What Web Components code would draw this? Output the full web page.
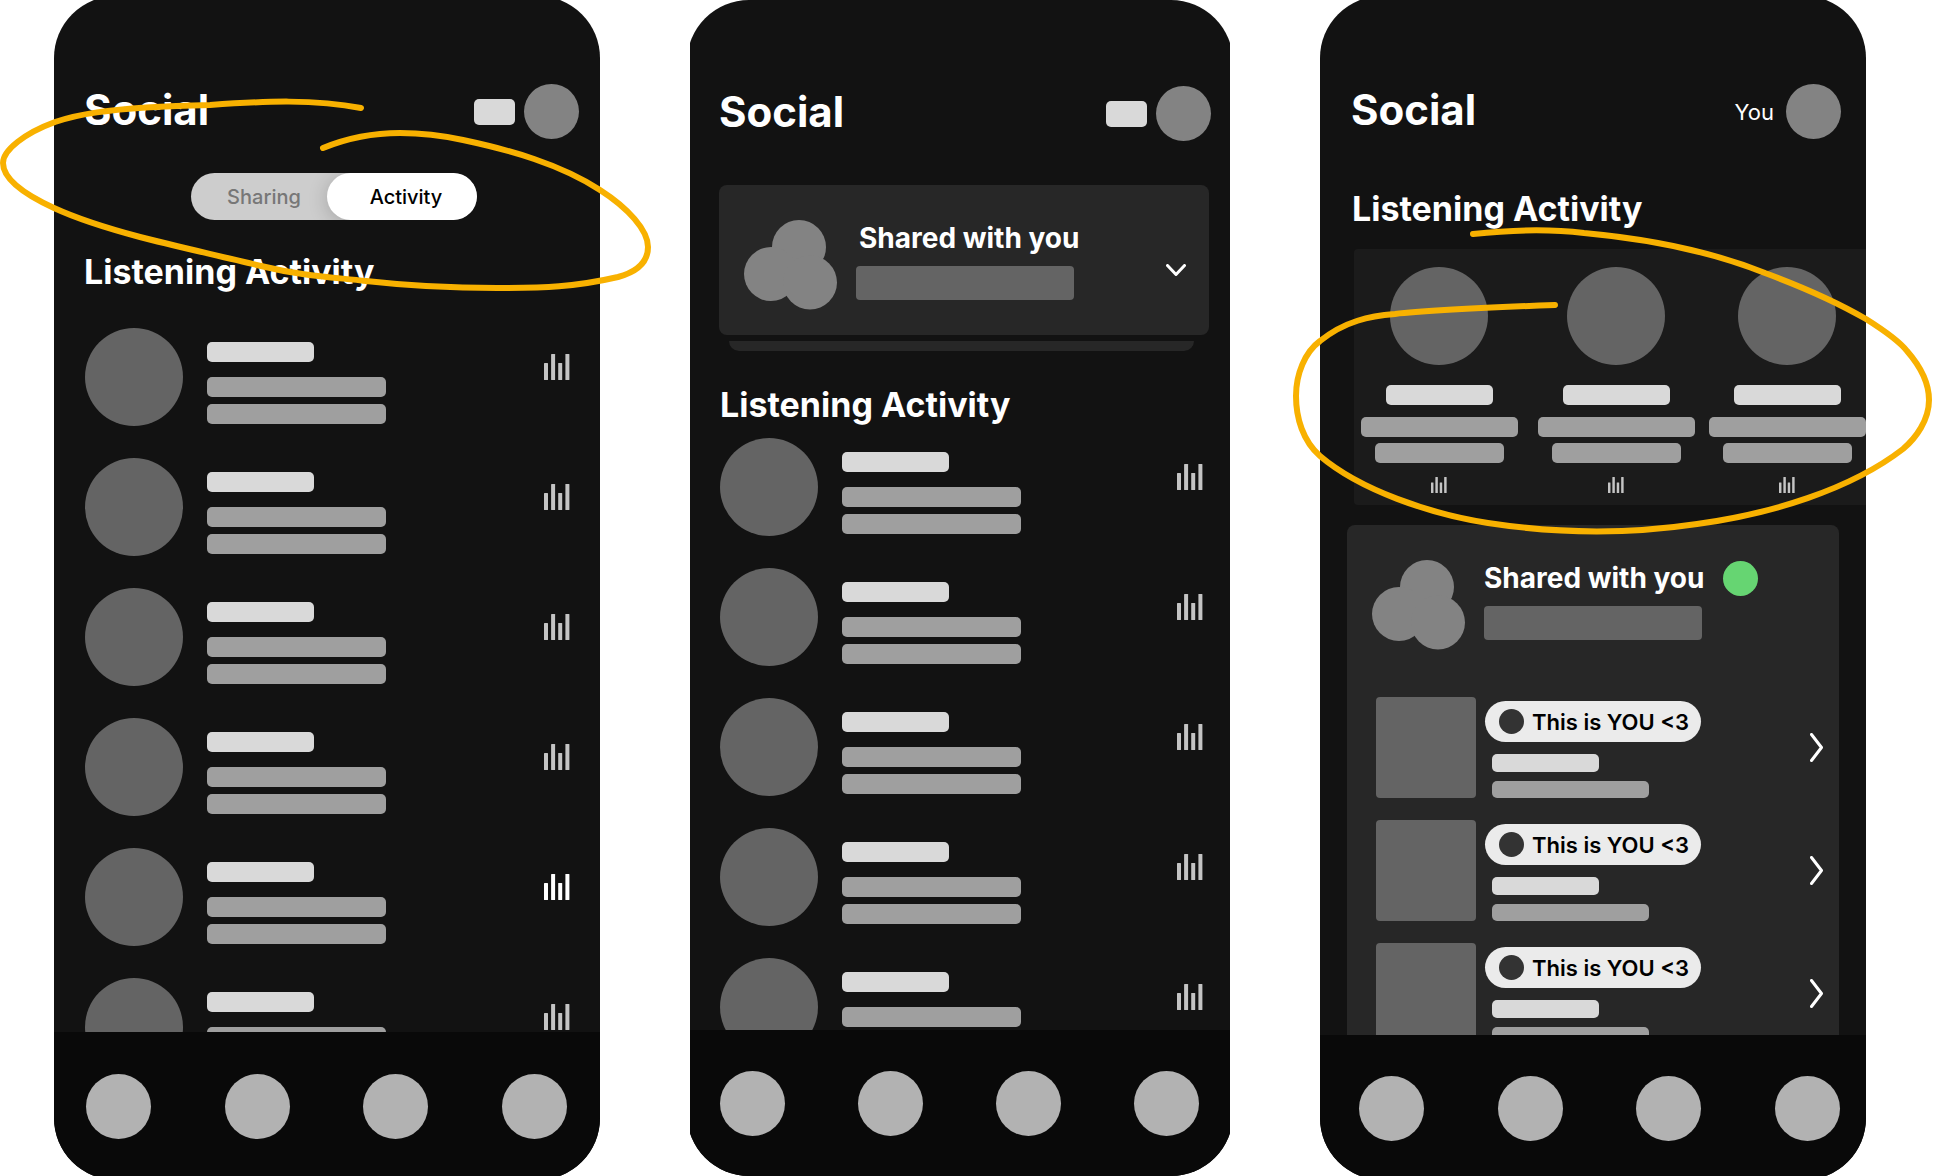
<!DOCTYPE html>
<html lang="en">
<head>
<meta charset="UTF-8">
<meta name="viewport" content="width=device-width, initial-scale=1.0">
<title>Social</title>
<style>
    :root {
        --color-screen: #121212;
        --color-nav: #090909;
        --color-card: #272727;
        --color-light: #d9d9d9;
        --color-mid: #9f9f9f;
        --color-dark: #646464;
        --color-avatar: #838383;
        --color-marker: #f8b100;
    }

    body {
        margin: 0;
        background: #fff;
        color: #fff;
        font-family: Inter, "Liberation Sans", sans-serif;
    }

    main {
        display: grid;
        grid-template-columns: 546fr 540fr 546fr;
        column-gap: 90px;
        height: 100vh;
        padding: 0 67px 0 54px;
        box-sizing: border-box;
        overflow: hidden;
    }

    h2 {
        margin: 0;
        font-size: 34px;
        line-height: 40px;
        font-weight: 700;
    }

    .list {
        display: flex;
        flex-direction: column;
        gap: 32px;
        padding: 0 30px 0 31px;
    }

    #activity h2 { padding: 32px 30px 36px; }
    #shared h2 { padding: 34px 33px 13px; }
    #carousel h2 { padding: 50px 32px 20px; }
    #shared .list { padding-left: 33px; }

    #activity { --nav-padding: 42px 33px 41px 32px; }
    #shared { --bleed-y: 0px; --bleed-x: -3px; --clip: hidden; --nav-padding: 41px 34px 40px 33px; }
    #carousel { --nav-padding: 41px 26px 39px 39px; }

    #shared app-header { --header-padding: 86px 22px 0 32px; }
    #carousel app-header { --header-padding: 88px 25px 0 31px; --header-gap: 12px; }

    .deck { padding: 44px 24px 0 32px; --title-indent: 3px; }
    .strip {
        display: grid;
        grid-template-columns: 178fr 171fr 157fr;
        margin-left: 34px;
        padding: 18px 0 12px 6px;
        background: #1b1b1b;
        border-radius: 4px 0 0 4px;
    }

    .shared-card {
        display: flex;
        flex-direction: column;
        gap: 22px;
        margin: 20px 27px 0 27px;
        padding: 35px 16px 60px 25px;
        background: var(--color-card);
        border-radius: 8px;
    }

    .shared-card shared-summary { margin-bottom: 25px; }
    .you { font-size: 22px; line-height: 28px; }
</style>
</head>
<body>
<main>
    <app-phone id="activity">
        <app-header heading="Social"><placeholder-bar width="41px" height="26px"></placeholder-bar></app-header>
        <view-toggle></view-toggle>
        <h2>Listening Activity</h2>
        <div class="list">
            <activity-row></activity-row>
            <activity-row></activity-row>
            <activity-row></activity-row>
            <activity-row></activity-row>
            <activity-row active></activity-row>
            <activity-row></activity-row>
        </div>
        <marker-stroke slot="marker" left="-54px" width="660" height="300"
            path="M361 108C315 99 265 101 210 105C100 107 70 117 55 122C25 133 3 150 3 163C3 180 28 196 54 208C80 220 110 229 140 237S220 256 261 266S330 277 366 281C410 286 450 288 497 288S575 287 618 277C640 271 648 260 648 247C648 230 628 208 600 190C560 164 510 150 463 140C440 135 420 133 400 133C370 133 345 139 323 148"></marker-stroke>
    </app-phone>

    <app-phone id="shared">
        <app-header heading="Social"><placeholder-bar width="41px" height="26px"></placeholder-bar></app-header>
        <div class="deck"><shared-deck></shared-deck></div>
        <h2>Listening Activity</h2>
        <div class="list">
            <activity-row></activity-row>
            <activity-row></activity-row>
            <activity-row></activity-row>
            <activity-row></activity-row>
            <activity-row></activity-row>
        </div>
    </app-phone>

    <app-phone id="carousel">
        <app-header heading="Social"><span class="you">You</span></app-header>
        <h2>Listening Activity</h2>
        <div class="strip">
            <activity-card></activity-card>
            <activity-card></activity-card>
            <activity-card></activity-card>
        </div>
        <section class="shared-card">
            <shared-summary online></shared-summary>
            <playlist-row>This is YOU &lt;3</playlist-row>
            <playlist-row>This is YOU &lt;3</playlist-row>
            <playlist-row>This is YOU &lt;3</playlist-row>
        </section>
        <marker-stroke slot="marker" left="-27px" width="640" height="540"
            path="M180 234C217 230 257 229 291 233C357 239 417 251 472 273C507 286 542 301 573 319C592 331 607 342 614 351C628 367 636 384 636 400C636 420 623 438 610 449C557 490 477 514 404 524C337 534 267 534 195 523C137 514 67 490 27 456C10 441 3 418 3 396C3 374 12 352 27 341C52 321 77 316 102 314C127 311 207 307 262 305"></marker-stroke>
    </app-phone>
</main>

<script>
class PlaceholderBar extends HTMLElement {
    constructor() {
        super();
        this.attachShadow({ mode: 'open' });
    }

    connectedCallback() {
        const width = this.getAttribute('width') || '107px';
        const height = this.getAttribute('height') || '20px';
        const color = this.getAttribute('color') || 'var(--color-light)';
        const radius = this.getAttribute('radius') || '5px';

        this.shadowRoot.innerHTML = `
            <style>
                :host {
                    display: block;
                    flex: none;
                    width: ${width};
                    height: ${height};
                    background: ${color};
                    border-radius: ${radius};
                }
            </style>
        `;
    }
}

class EqualizerIcon extends HTMLElement {
    constructor() {
        super();
        this.attachShadow({ mode: 'open' });
        this.shadowRoot.innerHTML = `
            <style>
                :host { display: block; flex: none; width: 26px; height: 26px; color: #c4c4c4; }
                svg { display: block; width: 100%; height: 100%; fill: currentColor; }
            </style>
            <svg viewBox="0 0 26 26" aria-hidden="true">
                <rect x="0" y="9" width="4" height="17" rx=".5"/>
                <rect x="7.1" y="0" width="4" height="26" rx=".5"/>
                <rect x="14.2" y="9" width="4" height="17" rx=".5"/>
                <rect x="21.4" y="0" width="4" height="26" rx=".5"/>
            </svg>
        `;
    }
}

class MarkerStroke extends HTMLElement {
    constructor() {
        super();
        this.attachShadow({ mode: 'open' });
    }

    connectedCallback() {
        const width = this.getAttribute('width');
        const height = this.getAttribute('height');

        this.shadowRoot.innerHTML = `
            <style>
                :host {
                    position: absolute;
                    top: 0;
                    left: ${this.getAttribute('left')};
                    pointer-events: none;
                }
                svg { display: block; }
                path {
                    fill: none;
                    stroke: var(--color-marker);
                    stroke-width: 6;
                    stroke-linecap: round;
                    stroke-linejoin: round;
                }
            </style>
            <svg width="${width}" height="${height}" viewBox="0 0 ${width} ${height}" aria-hidden="true">
                <path d="${this.getAttribute('path')}"/>
            </svg>
        `;
    }
}

class AppPhone extends HTMLElement {
    constructor() {
        super();
        this.attachShadow({ mode: 'open' });
        this.shadowRoot.innerHTML = `
            <style>
                :host {
                    display: flex;
                    position: relative;
                    min-width: 0;
                    min-height: 0;
                    overflow: var(--clip, visible);
                }
                .screen {
                    flex: 1;
                    min-width: 0;
                    display: flex;
                    flex-direction: column;
                    margin: var(--bleed-y, -4px) var(--bleed-x, 0);
                    border-radius: 62px;
                    background: var(--color-screen);
                    overflow: hidden;
                }
                .content {
                    flex: 1;
                    min-height: 0;
                    overflow: hidden;
                }
                nav {
                    display: flex;
                    justify-content: space-between;
                    padding: var(--nav-padding);
                    background: var(--color-nav);
                }
                button {
                    width: 65px;
                    height: 65px;
                    padding: 0;
                    border: 0;
                    border-radius: 50%;
                    background: #b2b2b2;
                    cursor: pointer;
                }
            </style>
            <div class="screen">
                <div class="content"><slot></slot></div>
                <nav>
                    <button aria-label="Home"></button>
                    <button aria-label="Search"></button>
                    <button aria-label="Social"></button>
                    <button aria-label="Library"></button>
                </nav>
            </div>
            <slot name="marker"></slot>
        `;
    }
}

class AppHeader extends HTMLElement {
    constructor() {
        super();
        this.attachShadow({ mode: 'open' });
    }

    connectedCallback() {
        this.shadowRoot.innerHTML = `
            <style>
                :host {
                    display: flex;
                    align-items: center;
                    gap: var(--header-gap, 9px);
                    padding: var(--header-padding, 88px 21px 0 30px);
                }
                h1 {
                    flex: 1;
                    margin: 0;
                    padding-bottom: 4px;
                    font-size: 42px;
                    line-height: 50px;
                    font-weight: 700;
                }
                button {
                    width: 55px;
                    height: 55px;
                    padding: 0;
                    border: 0;
                    border-radius: 50%;
                    background: var(--color-avatar);
                    cursor: pointer;
                }
            </style>
            <h1>${this.getAttribute('heading')}</h1>
            <slot></slot>
            <button aria-label="Profile"></button>
        `;
    }
}

class ViewToggle extends HTMLElement {
    constructor() {
        super();
        this.attachShadow({ mode: 'open' });
        this.shadowRoot.innerHTML = `
            <style>
                :host { display: flex; justify-content: center; padding: 34px 0 0 14px; }
                .track {
                    display: flex;
                    width: 286px;
                    height: 47px;
                    border-radius: 24px;
                    background: #cdcdcd;
                    overflow: hidden;
                }
                button {
                    flex: 1;
                    padding: 1px 0 0 10px;
                    border: 0;
                    border-radius: 24px;
                    background: transparent;
                    color: #777;
                    font: 500 20px/24px Inter, "Liberation Sans", sans-serif;
                    cursor: pointer;
                }
                button[aria-pressed="true"] {
                    flex: none;
                    width: 150px;
                    padding-left: 8px;
                    background: #fff;
                    color: #000;
                    box-shadow: 0 3px 20px rgba(0, 0, 0, .2);
                }
            </style>
            <div class="track" role="group" aria-label="View">
                <button aria-pressed="false">Sharing</button>
                <button aria-pressed="true">Activity</button>
            </div>
        `;

        const buttons = this.shadowRoot.querySelectorAll('button');
        buttons.forEach(button => {
            button.addEventListener('click', () => {
                buttons.forEach(b => b.setAttribute('aria-pressed', b === button));
            });
        });
    }
}

class ActivityRow extends HTMLElement {
    constructor() {
        super();
        this.attachShadow({ mode: 'open' });
        this.shadowRoot.innerHTML = `
            <style>
                :host { display: flex; align-items: flex-start; }
                .avatar {
                    flex: none;
                    width: 98px;
                    height: 98px;
                    border-radius: 50%;
                    background: var(--color-dark);
                }
                .lines {
                    flex: 1;
                    display: flex;
                    flex-direction: column;
                    gap: 7px;
                    padding: 14px 24px 0;
                }
                .name { margin-bottom: 8px; }
                equalizer-icon { margin-top: 26px; }
                :host([active]) equalizer-icon { color: #fff; }
            </style>
            <div class="avatar"></div>
            <div class="lines">
                <placeholder-bar class="name"></placeholder-bar>
                <placeholder-bar width="179px" color="var(--color-mid)"></placeholder-bar>
                <placeholder-bar width="179px" color="var(--color-mid)"></placeholder-bar>
            </div>
            <equalizer-icon></equalizer-icon>
        `;
    }
}

class ActivityCard extends HTMLElement {
    constructor() {
        super();
        this.attachShadow({ mode: 'open' });
        this.shadowRoot.innerHTML = `
            <style>
                :host {
                    display: flex;
                    flex-direction: column;
                    align-items: center;
                    width: 158px;
                }
                .avatar {
                    width: 98px;
                    height: 98px;
                    margin-bottom: 20px;
                    border-radius: 50%;
                    background: var(--color-dark);
                }
                .name { margin-bottom: 12px; }
                .track { margin-bottom: 6px; }
                equalizer-icon { width: 16px; height: 16px; margin-top: 14px; }
            </style>
            <div class="avatar"></div>
            <placeholder-bar class="name"></placeholder-bar>
            <placeholder-bar class="track" width="157px" color="var(--color-mid)"></placeholder-bar>
            <placeholder-bar width="129px" color="var(--color-mid)"></placeholder-bar>
            <equalizer-icon></equalizer-icon>
        `;
    }
}

class SharedSummary extends HTMLElement {
    constructor() {
        super();
        this.attachShadow({ mode: 'open' });
        this.shadowRoot.innerHTML = `
            <style>
                :host { display: flex; align-items: flex-start; gap: 18px; }
                .faces { flex: none; display: block; fill: var(--color-avatar); }
                .title { display: flex; align-items: center; gap: 19px; height: 36px; margin-bottom: 10px; }
                h3 {
                    margin: 0;
                    padding-left: var(--title-indent, 0);
                    font-size: 28px;
                    line-height: 36px;
                    font-weight: 700;
                    white-space: nowrap;
                }
                .dot { display: none; width: 35px; height: 35px; border-radius: 50%; background: #66d572; }
                :host([online]) .dot { display: block; }
            </style>
            <svg class="faces" width="94" height="90" viewBox="0 0 94 90" aria-hidden="true">
                <circle cx="55" cy="27" r="27"/>
                <circle cx="27" cy="54" r="27"/>
                <circle cx="66" cy="62.5" r="27"/>
            </svg>
            <div>
                <div class="title"><h3>Shared with you</h3><span class="dot"></span></div>
                <placeholder-bar width="218px" height="34px" color="var(--color-dark)" radius="4px"></placeholder-bar>
            </div>
        `;
    }
}

class SharedDeck extends HTMLElement {
    constructor() {
        super();
        this.attachShadow({ mode: 'open' });
        this.shadowRoot.innerHTML = `
            <style>
                :host { display: block; }
                .card {
                    display: flex;
                    align-items: center;
                    padding: 35px 23px 25px 25px;
                    border-radius: 8px;
                    background: var(--color-card);
                }
                shared-summary { flex: 1; }
                button { padding: 10px 0 0; border: 0; background: none; cursor: pointer; }
                button svg {
                    display: block;
                    fill: none;
                    stroke: #fff;
                    stroke-width: 3;
                    stroke-linecap: round;
                    stroke-linejoin: round;
                }
                .peek {
                    height: 10px;
                    margin: 6px 15px 0 10px;
                    border-radius: 0 0 10px 10px;
                    background: var(--color-card);
                }
            </style>
            <div class="card">
                <shared-summary></shared-summary>
                <button aria-label="Expand"><svg width="20" height="13" viewBox="0 0 20 13"><path d="M1.5 1.5L10 10.5L18.5 1.5"/></svg></button>
            </div>
            <div class="peek"></div>
        `;
    }
}

class PlaylistRow extends HTMLElement {
    constructor() {
        super();
        this.attachShadow({ mode: 'open' });
        this.shadowRoot.innerHTML = `
            <style>
                :host { display: flex; align-items: center; padding-left: 4px; }
                .cover {
                    flex: none;
                    width: 100px;
                    height: 101px;
                    border-radius: 4px;
                    background: var(--color-dark);
                }
                .details {
                    flex: 1;
                    display: flex;
                    flex-direction: column;
                    align-items: flex-start;
                    padding: 4px 0 0 9px;
                }
                .pill {
                    display: flex;
                    align-items: center;
                    gap: 8px;
                    height: 41px;
                    padding: 0 12px 0 14px;
                    border-radius: 21px;
                    background: #ebebeb;
                    color: #000;
                    font-size: 22px;
                    line-height: 28px;
                    font-weight: 600;
                    white-space: nowrap;
                }
                .pill::before {
                    content: "";
                    width: 25px;
                    height: 25px;
                    border-radius: 50%;
                    background: #333;
                }
                .lines {
                    display: flex;
                    flex-direction: column;
                    gap: 9px;
                    padding: 12px 0 0 7px;
                }
                button { padding: 0; border: 0; background: none; cursor: pointer; }
                button svg {
                    display: block;
                    fill: none;
                    stroke: #fff;
                    stroke-width: 3;
                    stroke-linecap: round;
                    stroke-linejoin: round;
                }
            </style>
            <div class="cover"></div>
            <div class="details">
                <div class="pill"><slot></slot></div>
                <div class="lines">
                    <placeholder-bar height="18px"></placeholder-bar>
                    <placeholder-bar width="157px" height="17px" color="var(--color-mid)"></placeholder-bar>
                </div>
            </div>
            <button aria-label="Open"><svg width="13" height="29" viewBox="0 0 13 29"><path d="M1.5 1.5L11.5 14.5L1.5 27.5"/></svg></button>
        `;
    }
}

customElements.define('placeholder-bar', PlaceholderBar);
customElements.define('equalizer-icon', EqualizerIcon);
customElements.define('marker-stroke', MarkerStroke);
customElements.define('app-phone', AppPhone);
customElements.define('app-header', AppHeader);
customElements.define('view-toggle', ViewToggle);
customElements.define('activity-row', ActivityRow);
customElements.define('activity-card', ActivityCard);
customElements.define('shared-summary', SharedSummary);
customElements.define('shared-deck', SharedDeck);
customElements.define('playlist-row', PlaylistRow);
</script>
</body>
</html>
